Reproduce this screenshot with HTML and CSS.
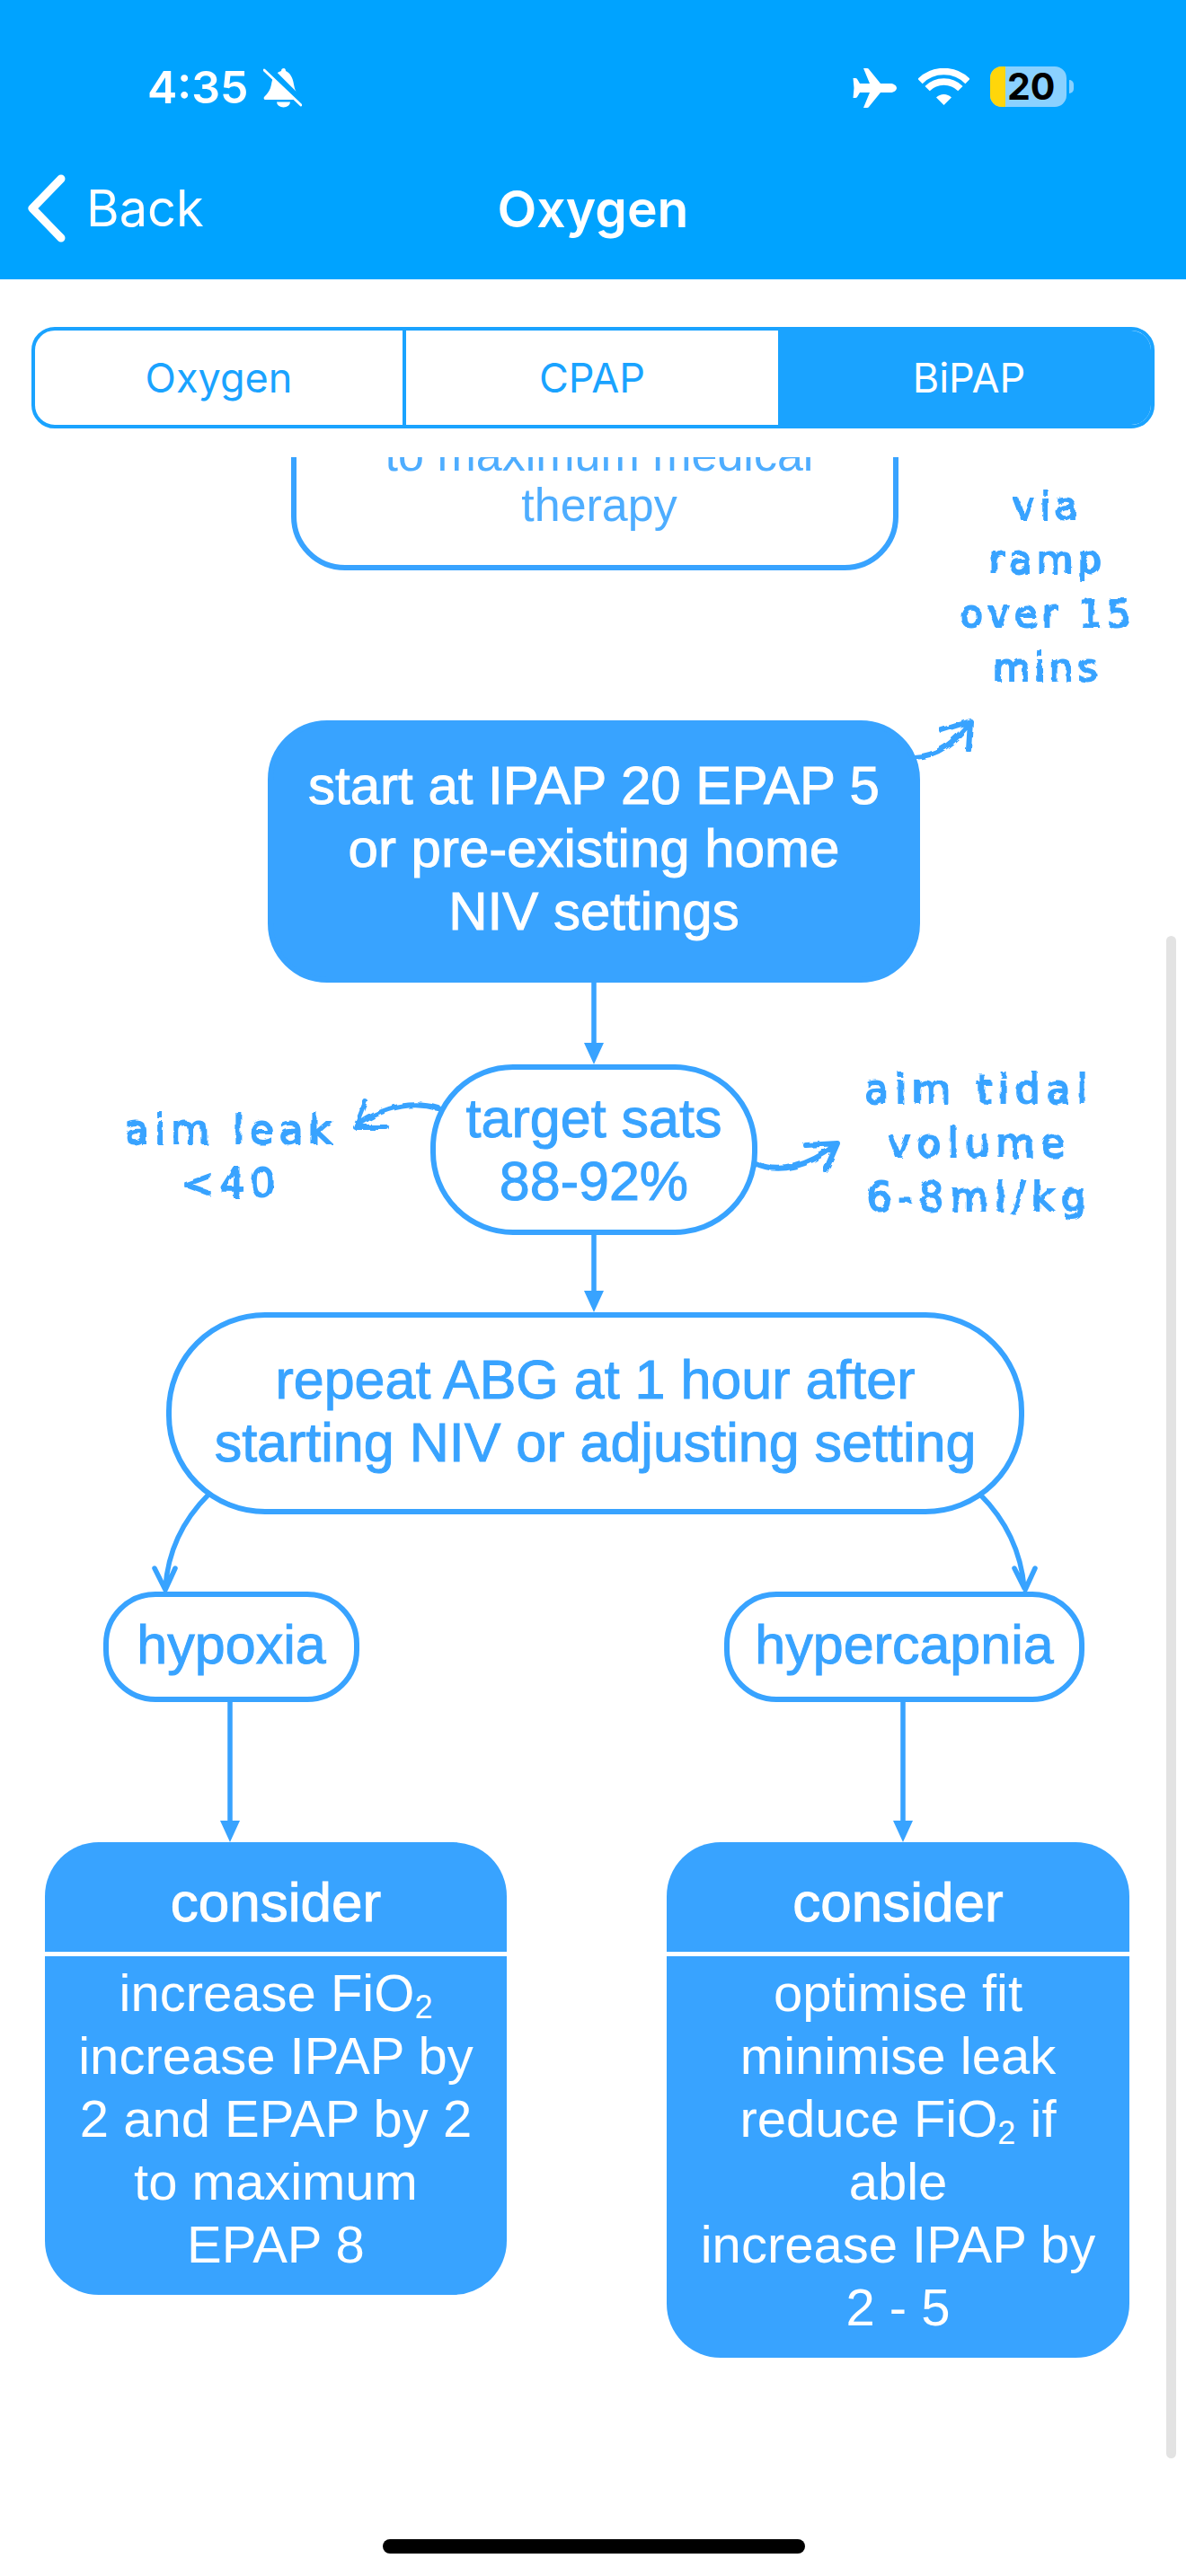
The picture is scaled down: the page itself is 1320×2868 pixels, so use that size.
FILE: index.html
```html
<!DOCTYPE html>
<html lang="en">
<head>
<meta charset="utf-8">
<title>Oxygen</title>
<link rel="stylesheet" href="styles.css">
</head>
<body>
<div class="phone">
  <header class="top">
    <div class="status">
      <div class="status-left">
        <span class="time">4:35</span>
        <svg class="bell" viewBox="0 0 43 45"><path d="M23 1c-2 0-3 1-3 3-7 2-10 8-11 15-1 6-4 10-8 14-1 1 0 3 1 3h37c2 0 3-2 1-4-3-3-5-7-6-13-1-7-4-13-9-15 0-2-1-3-2-3z" fill="#fff"/><path d="M15 38.500a7.500 6 0 0 0 15 0z" fill="#fff"/><path d="M4 0l39 39" stroke="#00a3ff" stroke-width="8" fill="none"/><path d="M1 3l41 39" stroke="#fff" stroke-width="3" stroke-linecap="round" fill="none"/></svg>
      </div>
      <div class="status-right">
        <svg class="plane" viewBox="0 0 49 44"><path d="M49 22C49 19 45 17 42 17L31 17 18 1Q17.500 0 16 0L12 0 19 17 8 17 5 12Q4.500 11 3 11L.5 11 1.500 22 .5 33 3 33Q4.500 33 5 32L8 27 19 27 12 44 16 44Q17.500 44 18 43L31 27 42 27C45 27 49 25 49 22Z" fill="#fff"/></svg>
        <svg class="wifi" viewBox="0 0 57 41"><path d="M2 14.500A37.500 37.500 0 0 1 55 14.500M10.100 22.600A26 26 0 0 1 46.900 22.600" fill="none" stroke="#fff" stroke-width="7.500"/><path d="M28.500 41L20 32.500A12 12 0 0 1 37 32.500Z" fill="#fff"/></svg>
        <div class="battery"><div class="battery-low"></div><span class="battery-num">20</span><div class="battery-nub"></div></div>
      </div>
    </div>
    <nav class="navbar">
      <a class="back"><svg class="chevron" viewBox="0 0 44 76"><path d="M38 5L6 38 38 71" fill="none" stroke="#fff" stroke-width="9" stroke-linecap="round" stroke-linejoin="round"/></svg><span>Back</span></a>
      <h1 class="title">Oxygen</h1>
      <span></span>
    </nav>
  </header>

  <div class="segments">
    <div class="segment segment-first">Oxygen</div>
    <div class="segment segment-mid">CPAP</div>
    <div class="segment segment-last is-active">BiPAP</div>
  </div>

  <main class="diagram">
    <svg class="hidden-defs" width="0" height="0"><defs>
      <filter id="rough" x="-5%" y="-5%" width="110%" height="110%"><feTurbulence type="fractalNoise" baseFrequency="0.09" numOctaves="2" seed="4"/><feDisplacementMap in="SourceGraphic" scale="5"/></filter>
    </defs></svg>

    <svg class="edges" viewBox="0 509 1320 2359">
      <g class="edge">
        <path d="M661 1093V1165M661 1373V1441M256 1892V2030M1005 1892V2030"/>
        <path class="curve" d="M232 1664C204 1692 187 1725 184 1768M1091 1664C1119 1692 1136 1725 1140 1768M172 1746L184 1770 195 1746M1129 1746L1141 1770 1152 1746"/>
      </g>
      <g class="head">
        <path d="M650 1161H672L661 1185ZM650 1437H672L661 1461ZM245 2027H267L256 2051ZM994 2027H1016L1005 2051Z"/>
      </g>
      <g class="hand">
        <path d="M1017 843C1045 842 1062 826 1079 805M1048 813L1080 803 1078 835"/>
        <path d="M488 1234C460 1226 430 1232 402 1250M407 1227L396 1255 430 1255"/>
        <path d="M840 1295C868 1308 900 1298 930 1275M897 1275L932 1273 919 1303"/>
      </g>
    </svg>

    <div class="node node-top"><span>to maximum medical</span><span>therapy</span></div>
    <div class="node node-start is-filled"><span class="nudge-up">start at IPAP 20 EPAP 5<br>or pre-existing home<br>NIV settings</span></div>
    <div class="node node-target">target sats<br>88-92%</div>
    <div class="node node-repeat"><span class="nudge-up">repeat ABG at 1 hour after<br>starting NIV or adjusting setting</span></div>
    <div class="node node-hypoxia"><span class="nudge-up">hypoxia</span></div>
    <div class="node node-hypercapnia"><span class="nudge-up">hypercapnia</span></div>

    <section class="card card-left">
      <h2 class="card-head">consider</h2>
      <p class="card-body">increase FiO<sub>2</sub><br>increase IPAP by<br>2 and EPAP by 2<br>to maximum<br>EPAP 8</p>
    </section>
    <section class="card card-right">
      <h2 class="card-head">consider</h2>
      <p class="card-body">optimise fit<br>minimise leak<br>reduce FiO<sub>2</sub> if<br>able<br>increase IPAP by<br>2 - 5</p>
    </section>

    <div class="note note-via">via<br>ramp<br>over 15<br>mins</div>
    <div class="note note-leak">aim leak<br>&lt;40</div>
    <div class="note note-tidal">aim tidal<br>volume<br>6-8ml/kg</div>
  </main>

  <div class="scrollbar"></div>
  <div class="home"></div>
</div>
</body>
</html>
```

FILE: styles.css
```css
* { box-sizing: border-box; }
html, body { margin: 0; padding: 0; background: #fff; }
.phone {
  position: relative;
  width: 1320px;
  height: 2868px;
  overflow: hidden;
  display: flex;
  flex-direction: column;
  font-family: "Liberation Sans", Arial, sans-serif;
}
.top {
  height: 311px;
  background: #00a3ff;
  color: #fff;
  display: flex;
  flex-direction: column;
  flex: none;
}
.status {
  height: 74px;
  margin-top: 74px;
  display: flex;
  justify-content: space-between;
  padding: 0 133px 0 164px;
}
.status-left { display: flex; align-items: center; gap: 16px; height: 46px; }
.time { font-family: Inter, sans-serif; font-weight: 600; font-size: 50px; line-height: 46px; }
.bell { width: 43px; height: 45px; }
.status-right { display: flex; align-items: flex-start; height: 46px; }
.plane { width: 49px; height: 44px; margin-top: 2px; }
.wifi { width: 57px; height: 41px; margin: 2px 0 0 24px; }
.battery {
  position: relative;
  width: 85px;
  height: 45px;
  margin-left: 23px;
  border-radius: 13px;
  background: #8ad1ff;
  overflow: visible;
  display: flex;
  align-items: center;
}
.battery-low { width: 17px; height: 45px; background: #ffd60a; border-radius: 13px 0 0 13px; }
.battery-num { font-family: Inter, sans-serif; font-weight: 700; font-size: 41px; line-height: 45px; color: #000; margin-left: 2px; }
.battery-nub { position: absolute; left: 88px; top: 15px; width: 5px; height: 15px; background: #8ad1ff; border-radius: 0 5px 5px 0; }
.navbar {
  display: grid;
  grid-template-columns: 1fr auto 1fr;
  align-items: center;
  height: 76px;
  margin-top: 46px;
  padding: 0 30px;
}
.back { display: flex; align-items: center; gap: 22px; font-family: Inter, sans-serif; font-size: 56px; }
.chevron { width: 44px; height: 76px; }
.title { margin: 0; font-family: Inter, sans-serif; font-weight: 600; font-size: 57px; }

.segments {
  display: flex;
  flex: none;
  height: 113px;
  margin: 53px 35px 0;
  border: 4px solid #1aa3ff;
  border-radius: 26px;
  overflow: hidden;
}
.segment {
  display: flex;
  align-items: center;
  justify-content: center;
  font-family: Inter, sans-serif;
  font-size: 45px;
  color: #1aa3ff;
}
.segment-first { flex: none; width: 409px; }
.segment-mid { flex: none; width: 418px; border-left: 4px solid #1aa3ff; }
.segment-last { flex: 1; padding-left: 10px; }
.segment.is-active { background: #1aa3ff; color: #fff; }

.diagram { position: relative; flex: 1; margin-top: 32px; overflow: hidden; }
.hidden-defs { position: absolute; }
.edges { position: absolute; left: 0; top: 0; width: 1320px; height: 2359px; }
.edge path { fill: none; stroke: #38a3ff; stroke-width: 5.500px; }
.edge .curve { stroke-linecap: round; stroke-linejoin: round; }
.head path { fill: #38a3ff; }
.hand { filter: url(#rough); }
.hand path { fill: none; stroke: #38a3ff; stroke-width: 6px; stroke-linecap: round; stroke-linejoin: round; }

.node {
  position: absolute;
  display: flex;
  align-items: center;
  justify-content: center;
  text-align: center;
  border: 6px solid #38a3ff;
  background: #fff;
  color: #38a3ff;
  font-size: 61px;
  line-height: 70px;
  -webkit-text-stroke: 1px currentColor;
}
.node.is-filled { background: #38a3ff; color: #fff; }
.nudge-up { margin-bottom: 6px; }
.node-top {
  left: 324px; top: -100px; width: 676px; height: 226px;
  flex-direction: column;
  justify-content: flex-end;
  padding: 0 0 39px 10px;
  border-radius: 60px;
  color: #4eadff;
  font-size: 52px;
  line-height: 56px;
  font-weight: 400;
  -webkit-text-stroke: 0;
}
.node-start { left: 298px; top: 293px; width: 726px; height: 292px; border-radius: 66px; font-size: 60px; }
.node-target { left: 479px; top: 676px; width: 364px; height: 190px; border-radius: 92px; }
.node-repeat { left: 185px; top: 952px; width: 955px; height: 225px; border-radius: 110px; }
.node-hypoxia { left: 115px; top: 1263px; width: 285px; height: 123px; border-radius: 58px; }
.node-hypercapnia { left: 806px; top: 1263px; width: 401px; height: 123px; border-radius: 58px; }

.card {
  position: absolute;
  top: 1542px;
  background: #38a3ff;
  color: #fff;
  text-align: center;
  border-radius: 60px;
  overflow: hidden;
}
.card-left { left: 50px; width: 514px; }
.card-right { left: 742px; width: 515px; }
.card-head {
  margin: 0;
  height: 127px;
  padding-top: 32px;
  border-bottom: 5px solid #fff;
  font-size: 62px;
  font-weight: 400;
  line-height: 70px;
  -webkit-text-stroke: 1px currentColor;
}
.card-body { margin: 0; padding: 6px 0 21px; font-size: 58px; line-height: 70px; }
.card-body sub { font-size: 36px; line-height: 0; vertical-align: -8px; }

.note {
  position: absolute;
  text-align: center;
  color: #38a3ff;
  font-family: "DejaVu Sans", sans-serif;
  font-size: 42px;
  line-height: 60px;
  letter-spacing: 5px;
  -webkit-text-stroke: 2px currentColor;
  filter: url(#rough);
}
.note-via { left: 1046px; top: 25px; width: 240px; }
.note-leak { left: 117px; top: 719px; width: 280px; font-size: 44px; letter-spacing: 6px; }
.note-tidal { left: 935px; top: 674px; width: 310px; font-size: 44px; letter-spacing: 7px; }

.scrollbar { position: absolute; left: 1298px; top: 1042px; width: 11px; height: 1695px; background: #e3e3e3; border-radius: 6px; }
.home { position: absolute; left: 426px; top: 2827px; width: 470px; height: 16px; background: #000; border-radius: 8px; }
```
